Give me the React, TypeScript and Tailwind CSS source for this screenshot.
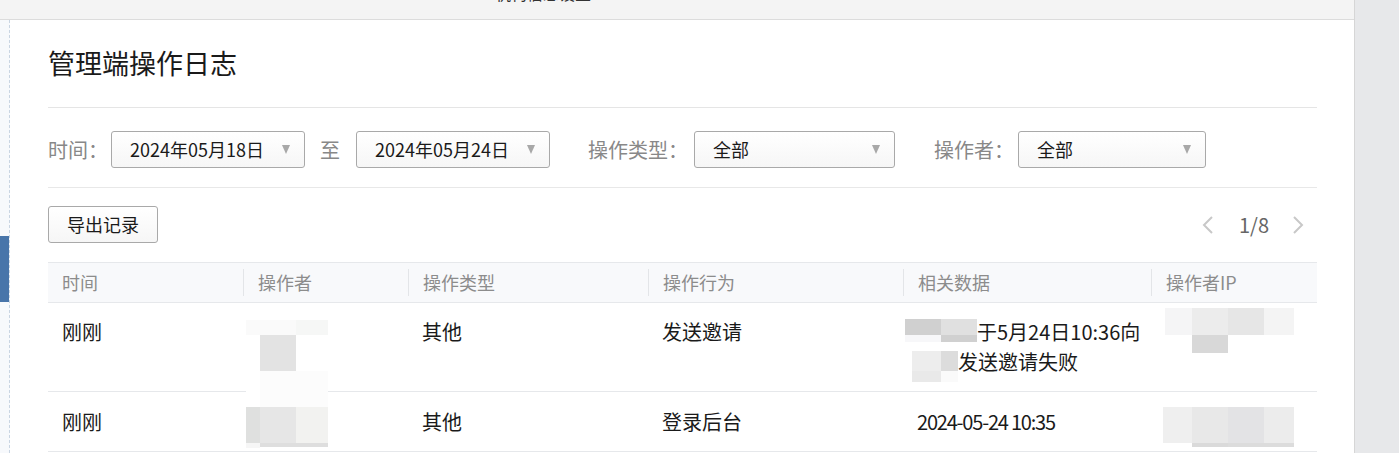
import React from 'react';

type Block = [number, number, number, number, string];

// mosaic (blurred) patches over the table, coords relative to table top-left (48, 263)
const mosaic: Block[] = [
  // operator column
  [198, 58, 50, 15, '#fafafa'],
  [248, 58, 32, 15, '#f6f7f6'],
  [212, 73, 36, 36, '#e3e3e3'],
  [198, 109, 14, 36, '#ffffff'],
  [212, 109, 68, 36, '#fcfcfc'],
  [198, 145, 14, 36, '#dfe0df'],
  [212, 145, 36, 36, '#e6e6e6'],
  [248, 145, 32, 36, '#f2f2f0'],
  [198, 181, 14, 5, '#f6f6f6'],
  [212, 181, 68, 4, '#dedede'],
  // related data column
  [857, 57, 36, 16, '#d0d0d0'],
  [893, 57, 36, 16, '#e0e0e0'],
  [857, 73, 36, 7, '#f7f7f9'],
  [893, 73, 36, 7, '#d0d0d0'],
  [864, 89, 29, 20, '#ededed'],
  [893, 89, 17, 20, '#dcdcdc'],
  [864, 109, 29, 11, '#e9e9e9'],
  [893, 109, 17, 11, '#fafafa'],
  // ip row 1
  [1117, 46, 27, 27, '#f5f5f6'],
  [1144, 46, 36, 27, '#ececec'],
  [1180, 46, 36, 27, '#e6e6e6'],
  [1216, 46, 30, 27, '#f4f4f4'],
  [1144, 73, 36, 18, '#d8d8d8'],
  // ip row 2
  [1115, 145, 29, 36, '#efefef'],
  [1144, 145, 36, 36, '#e8e8e8'],
  [1180, 145, 36, 36, '#e3e3e5'],
  [1216, 145, 30, 36, '#ececec'],
  [1144, 181, 36, 4, '#dadada'],
  [1180, 181, 66, 4, '#dcdcdc'],
];

const Arrow = () => (
  <svg width="8" height="9" viewBox="0 0 8 9" className="shrink-0">
    <path d="M0 0h8L4 9z" fill="#a8a8a8" />
  </svg>
);

const Select: React.FC<{ value: string; width: string }> = ({ value, width }) => (
  <div
    className={`${width} flex h-[37px] shrink-0 items-center justify-between rounded-[3px] border border-[#a9a9a9] bg-gradient-to-b from-white to-[#f6f6f6] pl-[18px] pr-[14px] text-[18px] text-[#1a1a1a]`}
  >
    <span>{value}</span>
    <Arrow />
  </div>
);

const headers = ['时间', '操作者', '操作类型', '操作行为', '相关数据', '操作者IP'];

export default function App() {
  return (
    <div className="flex h-[453px] w-[1399px] overflow-hidden bg-white font-['Noto_Sans_CJK_SC','Noto_Sans',sans-serif]">
      <div className="flex min-w-0 flex-1 flex-col">
        {/* top bar, page scrolled so only the bottom of the breadcrumb shows */}
        <div className="h-[20px] shrink-0 overflow-hidden border-b border-[#dcdcdc] bg-[#f4f4f4]">
          <div className="-mt-[17px] ml-[495px] text-[16px] leading-[20px] text-[#333]">机构信息设置</div>
        </div>

        <div className="flex flex-1">
          {/* side rail */}
          <div className="flex w-[10px] shrink-0 flex-col border-r border-dashed border-[#c9d5e3] bg-[#f7f9fc]">
            <div className="mt-[216px] h-[66px] w-[9px] bg-[#4875aa]" />
          </div>

          <div className="flex-1 pl-[38px] pr-[37px]">
            {/* title */}
            <div className="flex h-[88px] items-center border-b border-[#e5e5e5] text-[27px] text-[#1a1a1a]">
              管理端操作日志
            </div>

            {/* filters */}
            <div className="flex items-center border-b border-[#e8e8e8] pb-[19px] pt-[23px] text-[20px] text-[#888]">
              <span className="w-[63px] shrink-0">时间：</span>
              <Select value="2024年05月18日" width="w-[194px]" />
              <span className="ml-[15px] mr-[16px]">至</span>
              <Select value="2024年05月24日" width="w-[194px]" />
              <span className="ml-[38px] w-[106px] shrink-0">操作类型：</span>
              <Select value="全部" width="w-[201px]" />
              <span className="ml-[39px] w-[84px] shrink-0">操作者：</span>
              <Select value="全部" width="w-[188px]" />
            </div>

            {/* toolbar */}
            <div className="flex items-center justify-between pb-[19px] pt-[18px]">
              <button className="h-[37px] w-[110px] rounded-[3px] border border-[#a9a9a9] bg-gradient-to-b from-white to-[#f6f6f6] text-[18px] text-[#1a1a1a]">
                导出记录
              </button>
              <div className="flex items-center text-[20px] text-[#666]">
                <svg width="12" height="20" viewBox="0 0 12 20" className="mr-[25px]">
                  <path d="M10 2L2 10l8 8" fill="none" stroke="#c8c8c8" strokeWidth="2" />
                </svg>
                <span>1/8</span>
                <svg width="12" height="20" viewBox="0 0 12 20" className="ml-[23px] mr-[13px]">
                  <path d="M2 2l8 8-8 8" fill="none" stroke="#c8c8c8" strokeWidth="2" />
                </svg>
              </div>
            </div>

            {/* table */}
            <div className="relative">
              <div className="grid grid-cols-[195px_165px_240px_255px_248px_165px] border-y border-[#e6e8eb] bg-[#f8f9fb] text-[18px] text-[#8c8c8c]">
                {headers.map((h, i) => (
                  <div key={h} className="flex h-[39px] items-center">
                    {i > 0 && <div className="h-[27px] w-px bg-[#e3e5e8]" />}
                    <span className="ml-[14px]">{h}</span>
                  </div>
                ))}
              </div>

              <div className="grid h-[89px] grid-cols-[195px_165px_240px_255px_248px_165px] border-b border-[#e6e8eb] pt-[14px] text-[20px] leading-[30px] text-[#1a1a1a]">
                <div className="pl-[14px]">刚刚</div>
                <div />
                <div className="pl-[14px]">其他</div>
                <div className="pl-[14px]">发送邀请</div>
                <div className="whitespace-nowrap pl-[14px]">
                  <span className="inline-block w-[60px]" />于5月24日10:36向
                  <br />
                  <span className="inline-block w-[41px]" />发送邀请失败
                </div>
                <div />
              </div>

              <div className="grid h-[60px] grid-cols-[195px_165px_240px_255px_248px_165px] border-b border-[#e6e8eb] pt-[15px] text-[20px] leading-[30px] text-[#1a1a1a]">
                <div className="pl-[14px]">刚刚</div>
                <div />
                <div className="pl-[14px]">其他</div>
                <div className="pl-[14px]">登录后台</div>
                <div className="pl-[14px] tracking-[-1.2px]">2024-05-24 10:35</div>
                <div />
              </div>

              {mosaic.map(([x, y, w, h, c], i) => (
                <div
                  key={i}
                  className="absolute"
                  style={{ left: x, top: y, width: w, height: h, background: c }}
                />
              ))}
            </div>
          </div>
        </div>
      </div>

      {/* right gutter */}
      <div className="w-[45px] shrink-0 border-l border-[#d6d6d6] bg-[#e7e8ea]" />
    </div>
  );
}
